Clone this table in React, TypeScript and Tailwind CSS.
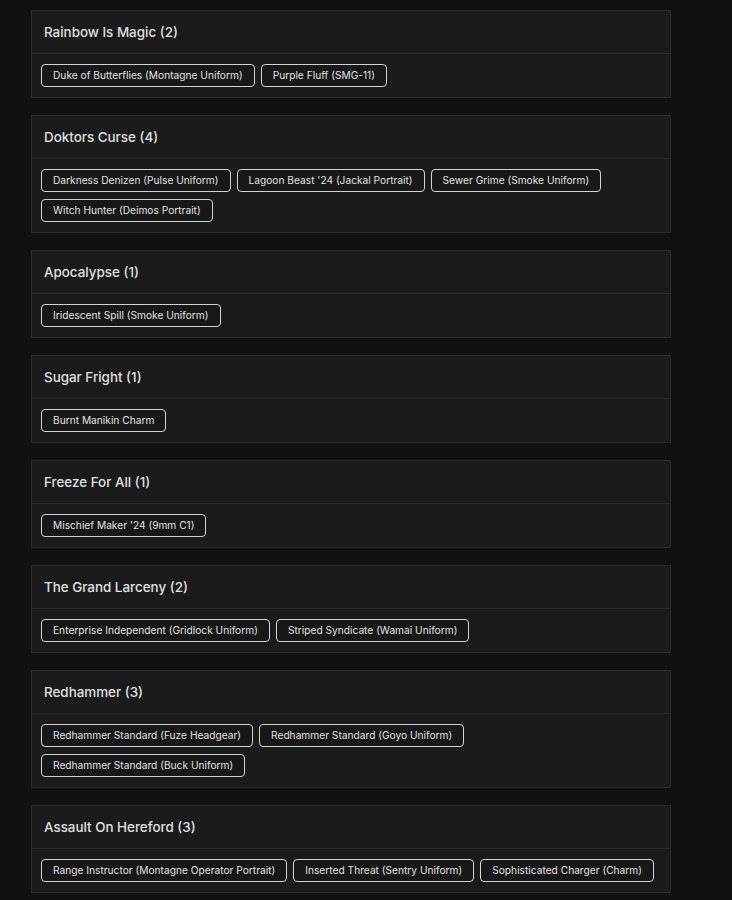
const GROUPS: { name: string; items: string[] }[] = [
  { name: "Rainbow Is Magic", items: ["Duke of Butterflies (Montagne Uniform)", "Purple Fluff (SMG-11)"] },
  {
    name: "Doktors Curse",
    items: [
      "Darkness Denizen (Pulse Uniform)",
      "Lagoon Beast '24 (Jackal Portrait)",
      "Sewer Grime (Smoke Uniform)",
      "Witch Hunter (Deimos Portrait)",
    ],
  },
  { name: "Apocalypse", items: ["Iridescent Spill (Smoke Uniform)"] },
  { name: "Sugar Fright", items: ["Burnt Manikin Charm"] },
  { name: "Freeze For All", items: ["Mischief Maker '24 (9mm C1)"] },
  { name: "The Grand Larceny", items: ["Enterprise Independent (Gridlock Uniform)", "Striped Syndicate (Wamai Uniform)"] },
  {
    name: "Redhammer",
    items: [
      "Redhammer Standard (Fuze Headgear)",
      "Redhammer Standard (Goyo Uniform)",
      "Redhammer Standard (Buck Uniform)",
    ],
  },
  {
    name: "Assault On Hereford",
    items: [
      "Range Instructor (Montagne Operator Portrait)",
      "Inserted Threat (Sentry Uniform)",
      "Sophisticated Charger (Charm)",
    ],
  },
];

function EventCard({ name, items }: { name: string; items: string[] }) {
  return (
    <section className="border border-[#2b2b2b] bg-[#1b1b1b]">
      <h2 className="h-[43px] flex items-center px-3 border-b border-[#2b2b2b] text-[13.4px] font-medium text-[#e0e0e0]">
        {name} ({items.length})
      </h2>
      <div className="flex flex-wrap gap-x-[6px] gap-y-[7px] px-[9px] py-[10px]">
        {items.map((it) => (
          <span
            key={it}
            className="h-[23px] flex items-center px-[11px] rounded-[4px] border border-[#d4d4d4] bg-[#181818] text-[10.2px] text-[#e2e2e2] whitespace-nowrap"
          >
            {it}
          </span>
        ))}
      </div>
    </section>
  );
}

export default function App() {
  return (
    <div className="min-h-[900px] bg-[#111111] pt-[10px] pb-6" style={{ fontFamily: "Inter, 'Open Sans', sans-serif" }}>
      <div className="ml-[31px] w-[640px] flex flex-col gap-[17px]">
        {GROUPS.map((g) => (
          <EventCard key={g.name} name={g.name} items={g.items} />
        ))}
      </div>
    </div>
  );
}
